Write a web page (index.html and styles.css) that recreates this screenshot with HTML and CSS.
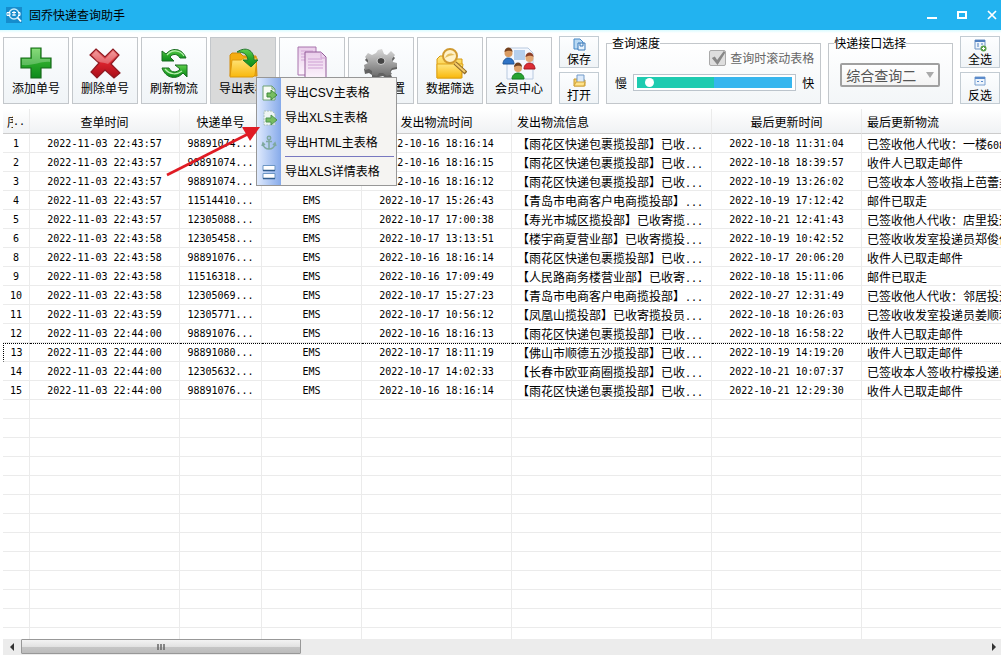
FILE: index.html
```html
<!DOCTYPE html>
<html lang="zh-CN">
<head>
<meta charset="utf-8">
<title>固乔快递查询助手</title>
<link rel="stylesheet" href="styles.css">
</head>
<body>
<svg class="defs" aria-hidden="true">
  <defs>
    <linearGradient id="green" x1="0" y1="0" x2="0" y2="1"><stop offset="0" stop-color="#5fd04d"/><stop offset=".5" stop-color="#2aa82a"/><stop offset="1" stop-color="#0d8a1b"/></linearGradient>
    <linearGradient id="red" x1="0" y1="0" x2="0" y2="1"><stop offset="0" stop-color="#f08080"/><stop offset=".5" stop-color="#d8222c"/><stop offset="1" stop-color="#a80d18"/></linearGradient>
    <linearGradient id="gold" x1="0" y1="0" x2="0" y2="1"><stop offset="0" stop-color="#ffe680"/><stop offset="1" stop-color="#f9b80c"/></linearGradient>
    <linearGradient id="steel" x1="0" y1="0" x2="0" y2="1"><stop offset="0" stop-color="#d8d8d8"/><stop offset="1" stop-color="#6e6e6e"/></linearGradient>
    <linearGradient id="page" x1="0" y1="0" x2="0" y2="1"><stop offset="0" stop-color="#e9cdea"/><stop offset="1" stop-color="#fdf5fd"/></linearGradient>
  </defs>
</svg>
<div class="app">
  <header class="titlebar">
    <svg class="logo" viewBox="0 0 16 16" aria-hidden="true"><rect width="16" height="16" fill="#168ccc"/><circle cx="8" cy="7" r="5" fill="none" stroke="#c8ecfb" stroke-width="1.3"/><path d="M11.500 10.500L15 14.500" stroke="#fff" stroke-width="1.800"/><path d="M1 5.500h3v3H1zM6 5.500h4M6 8h4M8 4v5M12 5.500h2v3h-2" fill="none" stroke="#fff"/></svg>
    <h1 class="title">固乔快递查询助手</h1>
    <div class="window-controls">
      <button aria-label="最小化"><svg viewBox="0 0 12 12"><path d="M1 9h10" stroke="#fff" stroke-width="2"/></svg></button>
      <button aria-label="最大化"><svg viewBox="0 0 12 12"><path d="M2 3h8v6H2z" fill="none" stroke="#fff" stroke-width="2"/></svg></button>
      <button aria-label="关闭"><svg viewBox="0 0 12 12"><path d="M2 2l8 8M10 2l-8 8" stroke="#fff" stroke-width="1.700"/></svg></button>
    </div>
  </header>

  <div class="toolbar">
    <div class="tools">
      <button class="tool"><svg viewBox="0 0 34 34"><path d="M12 2h10v10h10v10H22v10H12V22H2V12h10z" fill="url(#green)" stroke="#17691a" stroke-width="1.200"/><path d="M13 3h8v10h10v3C22 15 15 20 3 19v-6h10z" fill="#fff" opacity=".25"/></svg>添加单号</button>
      <button class="tool"><svg viewBox="0 0 34 34"><path d="M8 3l9 8 8-8 6 6-8 9 9 9-6 5-9-8-8 8-6-6 8-9-9-8z" fill="url(#red)" stroke="#8d1a22" stroke-width="1.200"/><path d="M8 5l9 8 8-8 4 4-9 9C13 16 10 16 9 15L4 9z" fill="#fff" opacity=".28"/></svg>删除单号</button>
      <button class="tool"><svg viewBox="0 0 34 34"><path d="M5 5l4 3C15 1 25 2 29 12h-6c-2-4-7-5-10-1l4 4H5z" fill="url(#green)" stroke="#1a6b22"/><path d="M30 31V19H18l5 4c-3 4-9 4-11-1H5c4 11 15 12 21 5z" fill="url(#green)" stroke="#1a6b22"/><path d="M10 9c5-6 13-5 17 1M25 25c-5 4-12 4-17-2" fill="none" stroke="#baf0b2" stroke-width="1.200"/></svg>刷新物流</button>
      <button class="tool tool-active"><svg viewBox="0 0 34 34"><path d="M4 9l2-2h8l3 3h13l1 20H4z" fill="#f5ad10" stroke="#d28c0c"/><path d="M4 31l2-17h9l3-2h13l-2 17-2 2z" fill="url(#gold)" stroke="#dc980c"/><path d="M11 6c9-6 17-2 17 8h4l-7 7-8-7h5c-1-6-4-8-11-8z" fill="url(#green)" stroke="#20762a"/></svg>导出表格</button>
      <button class="tool" aria-label="复制"><svg viewBox="0 0 34 34"><path d="M3 1h18v28H3z" fill="url(#page)" stroke="#a874ad"/><path d="M6 5h12M6 8h12M6 11h12M6 14h12" stroke="#d3a7d7"/><path d="M10 6h16l5 5v23H10z" fill="url(#page)" stroke="#925b98"/><path d="M26 6v6h5M13 13h14M13 16h15M13 19h15M13 22h15" fill="none" stroke="#cfa0d4"/></svg></button>
      <button class="tool"><svg viewBox="0 0 34 34"><path d="M14 6l4-1 2 5 3 1 4-3 4 4-3 4 1 3h4v4l-5 1-2 3 2 4-5 2-4-3-4 1-2 3-5-1v-4l-3-2-4 1-1-5 4-3v-3l-3-3 3-4 4 2 4-2z" fill="#626262"/><path d="M14 4l4-1 2 5 3 1 4-4 4 4-3 4 1 3 4 1v4l-5 1-2 3 2 3-5 2-4-3h-4l-2 3-5-1v-4l-3-2-4 1-1-5 4-2v-3l-3-3 3-4 4 2 4-2z" fill="url(#steel)"/><ellipse cx="17" cy="15" rx="4" ry="3.500" fill="#454545" stroke="#cfcfcf"/></svg>软件设置</button>
      <button class="tool"><svg viewBox="0 0 34 34"><path d="M4 13l3-3h9l2 3h11v19H4z" fill="url(#gold)" stroke="#d79a0e"/><path d="M4 18h26l-2 14H4z" fill="url(#gold)" stroke="#e0a516"/><path d="M22 17l11 10" stroke="#8f6a28" stroke-width="4"/><path d="M22 17l10 9" stroke="#f3ca6a" stroke-width="2"/><circle cx="17" cy="10" r="7" fill="#fff2c9" stroke="#d09a30" stroke-width="2"/><path d="M12 12c2-6 7-5 10-3-3 0-7 1-10 3z" fill="#e4bd5d"/></svg>数据筛选</button>
      <button class="tool"><svg viewBox="0 0 34 34"><path d="M8 2h18l5 5v26H5V6z" fill="#f4f8ff" stroke="#b8c9df"/><path d="M12 4h11v10H12z" fill="#b5cfee"/><path d="M1 18c0-8 11-8 11 0z" fill="#2e73c6" stroke="#1b5294"/><circle cx="6.500" cy="7" r="4" fill="#d99b62"/><path d="M2.500 6c0-6 8-6 8 0-3-2-5-1-8 0z" fill="#74401d"/><path d="M22 23c0-8 11-8 11 0z" fill="#dc2d35" stroke="#a31821"/><circle cx="27.500" cy="12" r="4" fill="#e3a875"/><path d="M23.500 11c0-6 8-6 8 0-3-2-5-1-8 0z" fill="#8c3f28"/><path d="M10 33c0-8 12-8 12 0z" fill="#27a331" stroke="#147a1e"/><circle cx="16" cy="22" r="4" fill="#dea16a"/><path d="M12 21c0-6 8-6 8 0-3-2-5-1-8 0z" fill="#71401f"/></svg>会员中心</button>
    </div>

    <div class="mini-column">
      <button class="mini"><svg viewBox="0 0 14 14"><path d="M2 1h6l3 3v7H2z" fill="#b9d9f3" stroke="#4587c5"/><path d="M6 5h7v7H6z" fill="#e8f3fc" stroke="#3979b9"/><path d="M8 5v3h3V5" fill="none" stroke="#3979b9"/></svg>保存</button>
      <button class="mini"><svg viewBox="0 0 14 14"><path d="M2 5h4l1 1h6v6H2z" fill="#f6d067" stroke="#c79a35"/><path d="M5 1h7v8H5z" fill="#dceafa" stroke="#739bc9"/><path d="M2 12l2-4h9l-1 4z" fill="#ffe38a" stroke="#d2a53a"/></svg>打开</button>
    </div>

    <fieldset class="group group-speed">
      <legend>查询速度</legend>
      <label class="check-row"><input class="check" type="checkbox" checked>查询时滚动表格</label>
      <div class="speed-row">
        <label for="speed">慢</label>
        <input class="speed" id="speed" type="range" min="0" max="100" value="5">
        <span>快</span>
      </div>
    </fieldset>

    <fieldset class="group group-api">
      <legend>快递接口选择</legend>
      <div class="select-box">
        <select aria-label="快递接口选择"><option>综合查询二</option></select>
      </div>
    </fieldset>

    <div class="mini-column">
      <button class="mini"><svg viewBox="0 0 14 14"><path d="M2 2h10v9H2z" fill="#eff5fc" stroke="#6c93c4"/><path d="M2 3h10" stroke="#4f7fc0" stroke-width="2"/><path d="M4 6h2M8 6h2M4 8h2" stroke="#4f7fc0"/><circle cx="10.500" cy="10.500" r="3" fill="#5a9f4b"/><path d="M10.500 9v3M9 10.500h3" stroke="#fff"/></svg>全选</button>
      <button class="mini"><svg viewBox="0 0 14 14"><path d="M2 3h10v8H2z" fill="#eff5fc" stroke="#7ba0d0"/><path d="M2 4h10" stroke="#5b8bcb" stroke-width="2"/><path d="M4 7.500h2M8 7.500h2" stroke="#5b8bcb"/></svg>反选</button>
    </div>
  </div>

  <main class="grid">
    <table class="records">
      <colgroup><col class="c-no"><col class="c-time"><col class="c-code"><col class="c-carrier"><col class="c-time"><col class="c-info"><col class="c-time"><col></colgroup>
      <thead>
        <tr><th><div class="short"><span class="cut">序</span><span class="dots">..</span></div></th><th>查单时间</th><th>快递单号</th><th></th><th>发出物流时间</th><th class="left">发出物流信息</th><th>最后更新时间</th><th class="left">最后更新物流</th></tr>
      </thead>
      <tbody>
        <tr><td>1</td><td>2022-11-03 22:43:57</td><td>98891074...</td><td></td><td>2022-10-16 18:16:14</td><td class="text">【雨花区快递包裹揽投部】已收<i>...</i></td><td>2022-10-18 11:31:04</td><td class="text">已签收他人代收：一楼<i>608</i></td></tr>
        <tr><td>2</td><td>2022-11-03 22:43:57</td><td>98891074...</td><td></td><td>2022-10-16 18:16:15</td><td class="text">【雨花区快递包裹揽投部】已收<i>...</i></td><td>2022-10-18 18:39:57</td><td class="text">收件人已取走邮件</td></tr>
        <tr><td>3</td><td>2022-11-03 22:43:57</td><td>98891074...</td><td></td><td>2022-10-16 18:16:12</td><td class="text">【雨花区快递包裹揽投部】已收<i>...</i></td><td>2022-10-19 13:26:02</td><td class="text">已签收本人签收指上芭蕾类</td></tr>
        <tr><td>4</td><td>2022-11-03 22:43:57</td><td>11514410...</td><td>EMS</td><td>2022-10-17 15:26:43</td><td class="text">【青岛市电商客户电商揽投部】<i>...</i></td><td>2022-10-19 17:12:42</td><td class="text">邮件已取走</td></tr>
        <tr><td>5</td><td>2022-11-03 22:43:57</td><td>12305088...</td><td>EMS</td><td>2022-10-17 17:00:38</td><td class="text">【寿光市城区揽投部】已收寄揽<i>...</i></td><td>2022-10-21 12:41:43</td><td class="text">已签收他人代收：店里投递</td></tr>
        <tr><td>6</td><td>2022-11-03 22:43:58</td><td>12305458...</td><td>EMS</td><td>2022-10-17 13:13:51</td><td class="text">【楼宇商夏营业部】已收寄揽投<i>...</i></td><td>2022-10-19 10:42:52</td><td class="text">已签收收发室投递员郑俊伟</td></tr>
        <tr><td>8</td><td>2022-11-03 22:43:58</td><td>98891076...</td><td>EMS</td><td>2022-10-16 18:16:14</td><td class="text">【雨花区快递包裹揽投部】已收<i>...</i></td><td>2022-10-17 20:06:20</td><td class="text">收件人已取走邮件</td></tr>
        <tr><td>9</td><td>2022-11-03 22:43:58</td><td>11516318...</td><td>EMS</td><td>2022-10-16 17:09:49</td><td class="text">【人民路商务楼营业部】已收寄<i>...</i></td><td>2022-10-18 15:11:06</td><td class="text">邮件已取走</td></tr>
        <tr><td>10</td><td>2022-11-03 22:43:58</td><td>12305069...</td><td>EMS</td><td>2022-10-17 15:27:23</td><td class="text">【青岛市电商客户电商揽投部】<i>...</i></td><td>2022-10-27 12:31:49</td><td class="text">已签收他人代收：邻居投递</td></tr>
        <tr><td>11</td><td>2022-11-03 22:43:59</td><td>12305771...</td><td>EMS</td><td>2022-10-17 10:56:12</td><td class="text">【凤凰山揽投部】已收寄揽投员<i>...</i></td><td>2022-10-18 10:26:03</td><td class="text">已签收收发室投递员姜顺利</td></tr>
        <tr><td>12</td><td>2022-11-03 22:44:00</td><td>98891076...</td><td>EMS</td><td>2022-10-16 18:16:13</td><td class="text">【雨花区快递包裹揽投部】已收<i>...</i></td><td>2022-10-18 16:58:22</td><td class="text">收件人已取走邮件</td></tr>
        <tr class="focused"><td>13</td><td>2022-11-03 22:44:00</td><td>98891080...</td><td>EMS</td><td>2022-10-17 18:11:19</td><td class="text">【佛山市顺德五沙揽投部】已收<i>...</i></td><td>2022-10-19 14:19:20</td><td class="text">收件人已取走邮件</td></tr>
        <tr><td>14</td><td>2022-11-03 22:44:00</td><td>12305632...</td><td>EMS</td><td>2022-10-17 14:02:33</td><td class="text">【长春市欧亚商圈揽投部】已收<i>...</i></td><td>2022-10-21 10:07:37</td><td class="text">已签收本人签收柠檬投递点</td></tr>
        <tr><td>15</td><td>2022-11-03 22:44:00</td><td>98891076...</td><td>EMS</td><td>2022-10-16 18:16:14</td><td class="text">【雨花区快递包裹揽投部】已收<i>...</i></td><td>2022-10-21 12:29:30</td><td class="text">收件人已取走邮件</td></tr>
      </tbody>
      <tbody>
        <tr><td><td><td><td><td><td><td><td></tr>
        <tr><td><td><td><td><td><td><td><td></tr>
        <tr><td><td><td><td><td><td><td><td></tr>
        <tr><td><td><td><td><td><td><td><td></tr>
        <tr><td><td><td><td><td><td><td><td></tr>
        <tr><td><td><td><td><td><td><td><td></tr>
        <tr><td><td><td><td><td><td><td><td></tr>
        <tr><td><td><td><td><td><td><td><td></tr>
        <tr><td><td><td><td><td><td><td><td></tr>
        <tr><td><td><td><td><td><td><td><td></tr>
        <tr><td><td><td><td><td><td><td><td></tr>
        <tr><td><td><td><td><td><td><td><td></tr>
        <tr><td><td><td><td><td><td><td><td></tr>
      </tbody>
    </table>
  </main>

  <div class="scrollbar">
    <button class="scroll-arrow" aria-label="向左滚动"><svg viewBox="0 0 8 8"><path d="M6 0v8L2 4z" fill="#333"/></svg></button>
    <div class="scroll-track"><div class="scroll-thumb"><svg viewBox="0 0 8 8"><path d="M1 1v6M4 1v6M7 1v6" stroke="#666" stroke-width="1.500"/></svg></div></div>
    <button class="scroll-arrow scroll-right" aria-label="向右滚动"><svg viewBox="0 0 8 8"><path d="M2 0v8l4-4z" fill="#333"/></svg></button>
  </div>

  <div class="menu" role="menu">
    <button class="menu-item" role="menuitem"><span class="menu-icon"><svg viewBox="0 0 16 16"><path d="M2 1h9l3 3v11H2z" fill="#f7fbf5" stroke="#6fa173"/><path d="M11 1v3h3" fill="none" stroke="#6fa173"/><path d="M6 8h4V5l6 5-6 5v-3H6z" fill="#77bd60" stroke="#3f8a3a"/></svg></span>导出CSV主表格</button>
    <button class="menu-item" role="menuitem"><span class="menu-icon"><svg viewBox="0 0 16 16"><path d="M3 1h8l3 3v11H3z" fill="#eef5f3" stroke="#a9bfb8" stroke-dasharray="2 1"/><path d="M5 8h5V5l6 5-6 5v-3H5z" fill="#77bd60" stroke="#4f9350"/></svg></span>导出XLS主表格</button>
    <button class="menu-item" role="menuitem"><span class="menu-icon"><svg viewBox="0 0 16 16"><g fill="none" stroke="#7fa9a0" stroke-width="1.500"><circle cx="8" cy="3" r="1.700"/><path d="M8 5v9M5 6.500h6M2 9c0 3 3 5 6 5s6-2 6-5M1 11l1-3 2 2M15 11l-1-3-2 2"/></g></svg></span>导出HTML主表格</button>
    <hr class="menu-line">
    <button class="menu-item" role="menuitem"><span class="menu-icon"><svg viewBox="0 0 16 16"><path d="M2 1.500h12v5H2zM2 9.500h12v5H2z" fill="#fff" stroke="#6d96c4"/><path d="M2 6.500h12M2 14.500h12" stroke="#335f91" stroke-width="1.500"/></svg></span>导出XLS详情表格</button>
  </div>

  <svg class="pointer" viewBox="0 0 96 52" aria-hidden="true"><path d="M1 50L82 9" stroke="#e01b24" stroke-width="2.600"/><path d="M94 2L76 2l8 14z" fill="#e01b24"/></svg>
</div>
</body>
</html>
```

FILE: styles.css
```css
* {
  box-sizing: border-box;
}

body {
  margin: 0;
  background: #fff;
  color: #000;
  font: 12px/16px "Noto Sans CJK SC", sans-serif;
}

button,
input,
select {
  margin: 0;
  padding: 0;
  border: 0;
  background: none;
  color: inherit;
  font: inherit;
}

svg {
  display: block;
}

.defs {
  position: absolute;
  width: 0;
  height: 0;
}

.app {
  position: relative;
  display: flex;
  flex-direction: column;
  height: 100vh;
  padding-bottom: 3px;
  overflow: hidden;
}

/* Title bar */
.titlebar {
  display: flex;
  flex: none;
  align-items: center;
  gap: 7px;
  height: 30px;
  padding: 0 3px 0 6px;
  background: #22b3f0;
}

.logo {
  width: 16px;
  height: 16px;
}

.title {
  flex: 1;
  margin: 0;
  font-size: 12px;
  font-weight: 400;
}

.window-controls {
  display: flex;
  gap: 18px;
}

.window-controls svg {
  width: 12px;
  height: 12px;
}

/* Toolbar */
.toolbar {
  display: flex;
  flex: none;
  gap: 7px;
  height: 79px;
  padding: 6px 1px 5px 3px;
  background: linear-gradient(#d9fbff, #fff 3px);
}

.tools {
  display: flex;
  gap: 3px;
  padding-top: 1px;
}

.tool {
  display: flex;
  flex-direction: column;
  align-items: center;
  width: 66px;
  padding-top: 8px;
  border: 1px solid #c3c7cb;
  background: linear-gradient(#fdfeff, #f0f4f7);
  white-space: nowrap;
}

.tool svg {
  width: 34px;
  height: 34px;
}

.tool-active {
  background: #d9dada;
}

.mini-column {
  display: flex;
  flex-direction: column;
  gap: 4px;
}

.mini {
  display: flex;
  flex: 1;
  flex-direction: column;
  align-items: center;
  width: 40px;
  padding-top: 1px;
  border: 1px solid #c3ccd3;
  background: linear-gradient(#fdfeff, #f0f4f7);
  line-height: 14px;
}

.mini svg {
  width: 14px;
  height: 14px;
}

.group {
  min-width: 0;
  margin: 0;
  padding: 0 6px;
  border: 1px solid #c3c7cb;
  background: linear-gradient(#fff, #f3f6f8);
}

.group legend {
  margin-left: -1px;
  padding: 0;
  line-height: 14px;
}

.group-speed {
  flex: 1 1 216px;
}

.group-api {
  flex: 1 1 125px;
}

.check-row {
  display: flex;
  align-items: center;
  justify-content: flex-end;
  gap: 4px;
  color: #666;
}

.check {
  width: 17px;
  height: 16px;
  border: 1px solid #aaa;
  border-radius: 2px;
  background: #dedede;
  appearance: none;
}

.check::before {
  display: block;
  height: 14px;
  background: #888;
  clip-path: polygon(10% 50%, 30% 40%, 45% 65%, 90% 0, 100% 10%, 48% 100%);
  content: "";
}

.speed-row {
  display: flex;
  align-items: center;
  gap: 6px;
  padding: 8px 0 0 2px;
}

.speed {
  flex: 1;
  min-width: 0;
  height: 17px;
  padding: 0 3px;
  border: 1px solid #bcc4cc;
  background: #fff;
  appearance: none;
}

.speed::-webkit-slider-runnable-track {
  height: 11px;
  padding: 1px;
  background: linear-gradient(90deg, #1ecbb0 50%, #36b6ee 50%);
}

.speed::-webkit-slider-thumb {
  width: 9px;
  height: 9px;
  border-radius: 50%;
  background: #fff;
  appearance: none;
}

.select-box {
  position: relative;
  margin: 13px 6px 0 5px;
}

.select-box select {
  width: 100%;
  height: 24px;
  padding-left: 4px;
  border: 2px solid #a0a0a0;
  border-radius: 2px;
  background: linear-gradient(#fff, #f3f3f3);
  color: #555;
  font-size: 14px;
  appearance: none;
}

.select-box::after {
  position: absolute;
  top: 9px;
  right: 6px;
  border: 4px solid transparent;
  border-top: 6px solid #aaa;
  border-bottom: 0;
  content: "";
}

/* Record grid */
.grid {
  flex: 1;
  min-height: 0;
  margin-left: 3px;
  overflow: hidden;
}

.records {
  width: 100%;
  border-spacing: 0;
  table-layout: fixed;
}

.c-no {
  width: 27px;
}

.c-time {
  width: 150px;
}

.c-code {
  width: 82px;
}

.c-carrier {
  width: 100px;
}

.c-info {
  width: 200px;
}

.records th,
.records td {
  overflow: hidden;
  padding: 0;
  border-right: 1px solid #ebebeb;
  border-bottom: 1px solid #ebebeb;
  text-align: center;
  white-space: nowrap;
}

.records th {
  height: 25px;
  padding-top: 2px;
  border-bottom-color: #ccc;
  background: linear-gradient(#fff, #f0f2f4);
  font-weight: 400;
}

.records td {
  height: 19px;
  font: 10px/15px "DejaVu Sans Mono", monospace;
}

.records tr > :last-child {
  border-right: 0;
}

.records .left,
.records .text {
  padding-left: 5px;
  text-align: left;
}

.records .text {
  font: 12px/15px "Noto Sans CJK SC", sans-serif;
}

.text i,
.dots {
  font: 10px/10px "DejaVu Sans Mono", monospace;
}

.short {
  display: flex;
  align-items: center;
  justify-content: center;
}

.cut {
  width: 6px;
  overflow: hidden;
}

.focused td {
  border-top: 1px dotted #000;
}

.focused td:first-child {
  border-left: 1px dotted #000;
}

/* Horizontal scrollbar */
.scrollbar {
  display: flex;
  flex: none;
  height: 16px;
  margin-left: 3px;
  background: #ececec;
}

.scroll-arrow {
  display: grid;
  place-items: center;
  width: 18px;
}

.scroll-right {
  width: 14px;
}

.scroll-arrow svg,
.scroll-thumb svg {
  width: 8px;
  height: 8px;
}

.scroll-track {
  flex: 1;
}

.scroll-thumb {
  display: grid;
  place-items: center;
  width: 29%;
  height: 15px;
  border: 1px solid #989898;
  border-radius: 1px;
  background: linear-gradient(#f3f3f3, #e2e2e2 50%, #c6c6c6 51%, #bcbcbc);
}

/* Export menu, opened below its toolbar button */
.menu {
  position: absolute;
  top: 77px;
  left: 256px;
  width: 141px;
  padding: 2px 0 1px;
  border: 1px solid #979797;
  background: linear-gradient(90deg, #dfeafd, #86aaea 24px, #f5f4f2 24px);
  font-family: "Liberation Sans", "Noto Sans CJK SC", sans-serif;
}

.menu-item {
  display: flex;
  align-items: center;
  gap: 4px;
  width: 100%;
  height: 25px;
  white-space: nowrap;
}

.menu-icon {
  display: grid;
  place-items: center;
  width: 24px;
}

.menu-icon svg {
  width: 16px;
  height: 16px;
}

.menu-line {
  height: 1px;
  margin: 1px 2px 2px 28px;
  border: 0;
  background: #7878c0;
}

.pointer {
  position: absolute;
  top: 125px;
  left: 166px;
  width: 96px;
  height: 52px;
}
```
